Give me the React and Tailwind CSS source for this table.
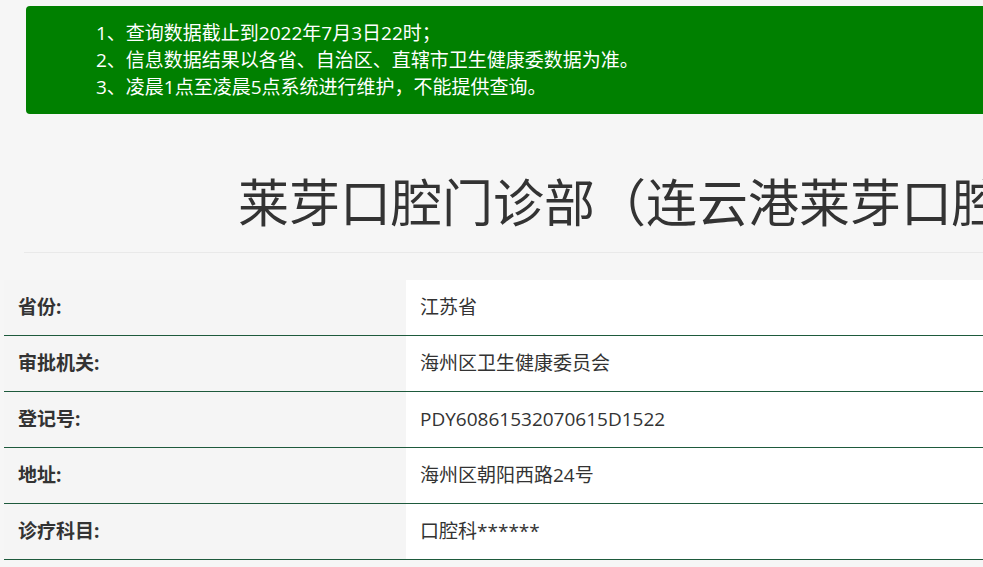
import React from "react";

const notices = [
    "1、查询数据截止到2022年7月3日22时；",
    "2、信息数据结果以各省、自治区、直辖市卫生健康委数据为准。",
    "3、凌晨1点至凌晨5点系统进行维护，不能提供查询。",
];

const rows = [
    { label: "省份:", value: "江苏省" },
    { label: "审批机关:", value: "海州区卫生健康委员会" },
    { label: "登记号:", value: "PDY60861532070615D1522" },
    { label: "地址:", value: "海州区朝阳西路24号" },
    { label: "诊疗科目:", value: "口腔科******" },
];

export default function App() {
    return (
        <div className="min-h-screen w-full overflow-hidden bg-[#f6f6f6] font-['Open_Sans','Noto_Sans_CJK_SC',sans-serif] text-[#333]">
            <div className="w-[1400px]">
                {/* notice banner */}
                <div className="ml-[26px] mt-[6px] h-[108px] rounded-[4px] bg-[#008000] pl-[70px] pt-[14px] text-[19px] leading-[27px] text-white">
                    {notices.map((n) => (
                        <p key={n}>{n}</p>
                    ))}
                </div>

                {/* title */}
                <h1 className="mt-[56px] whitespace-nowrap pl-[238px] font-['Noto_Sans_CJK_SC',sans-serif] text-[51px] leading-[60px] font-normal text-[#333]">
                    莱芽口腔门诊部（连云港莱芽口腔医疗管理有限公司）
                </h1>
                <div className="ml-[24px] mt-[22px] h-px bg-[#e9e9e9]"></div>

                {/* detail table */}
                <div className="ml-[4px] mt-[27px]">
                    {rows.map((r) => (
                        <div key={r.label} className="flex h-[56px] border-b border-[#1e5a3c]">
                            <div className="flex w-[402px] items-center bg-[#f5f5f5] pl-[14px] text-[19px] font-bold text-[#333]">
                                {r.label}
                            </div>
                            <div className="flex flex-1 items-center bg-white pl-[14px] text-[19px] text-[#333]">
                                {r.value}
                            </div>
                        </div>
                    ))}
                </div>
            </div>
        </div>
    );
}
